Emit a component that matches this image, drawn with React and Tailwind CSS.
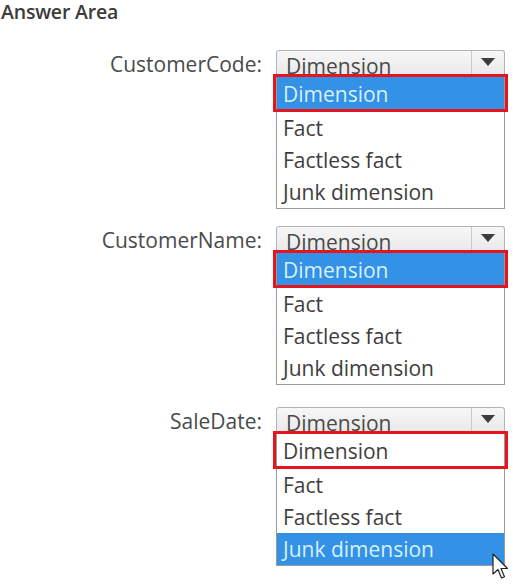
import React from "react";

const options = ["Dimension", "Fact", "Factless fact", "Junk dimension"];

function Cursor() {
  return (
    <svg
      className="absolute left-[492px] top-[553px]"
      width="18"
      height="28"
      viewBox="0 0 18 28"
    >
      <path
        d="M1 1 L1 21 L6 16.5 L9.5 25 L12.5 23.8 L9 15.5 L15.5 15.5 Z"
        fill="#ffffff"
        stroke="#222222"
        strokeWidth="1.2"
        strokeLinejoin="round"
      />
    </svg>
  );
}

function Dropdown({ label, hovered, outlined, filled, className }) {
  return (
    <div className={`flex ${className}`}>
      <div className="w-[262px] text-right text-[21px] text-[#4a4a4a] leading-[26px] pt-[1px]">
        {label}
      </div>
      <div className="ml-[14px] w-[229px]">
        <div className="h-[25px] flex border border-[#b4b4b4] border-b-0 rounded-t-[3px] bg-gradient-to-b from-[#f7f7f7] to-[#e9e9e9] overflow-hidden">
          <div className="flex-1 pl-[9px] text-[21px] leading-[30px] text-[#4a4a4a]">
            Dimension
          </div>
          <div className="w-[33px] border-l border-[#c8c8c8] flex items-center justify-center pb-[3px]">
            <svg width="14" height="8" viewBox="0 0 14 8">
              <path d="M0 0 L14 0 L7 8 Z" fill="#3c3c3c" />
            </svg>
          </div>
        </div>
        <div className="border border-[#9a9a9a] bg-white">
          {options.map((opt, i) => {
            const isBlue = (filled && i === 0) || hovered === i;
            const isRed = outlined && i === 0;
            return (
              <div
                key={opt}
                className={`relative pl-[6px] text-[21px] ${
                  isBlue ? "bg-[#3391e6] text-[#d6f0ff]" : "text-[#3e3e3e]"
                } ${i === 0 ? "h-[36px] leading-[36px]" : "h-[32px] leading-[32px]"}`}
              >
                {opt}
                {isRed && (
                  <div className="absolute left-[-4px] right-[-4px] top-[-2px] bottom-[0px] border-[3px] border-[#e8141b]" />
                )}
              </div>
            );
          })}
        </div>
      </div>
    </div>
  );
}

export default function App() {
  return (
    <div
      className="relative w-[513px] h-[585px] bg-white overflow-hidden"
      style={{ fontFamily: "'Open Sans', 'Noto Sans', sans-serif" }}
    >
      <h1 className="pl-[1px] text-[19.5px] font-semibold leading-[24px] text-[#3b3b3b] tracking-[-0.2px]">
        Answer Area
      </h1>
      <Dropdown className="mt-[26px]" label="CustomerCode:" outlined filled />
      <Dropdown className="mt-[17px]" label="CustomerName:" outlined filled />
      <Dropdown className="mt-[22px]" label="SaleDate:" outlined hovered={3} />
      <Cursor />
    </div>
  );
}
